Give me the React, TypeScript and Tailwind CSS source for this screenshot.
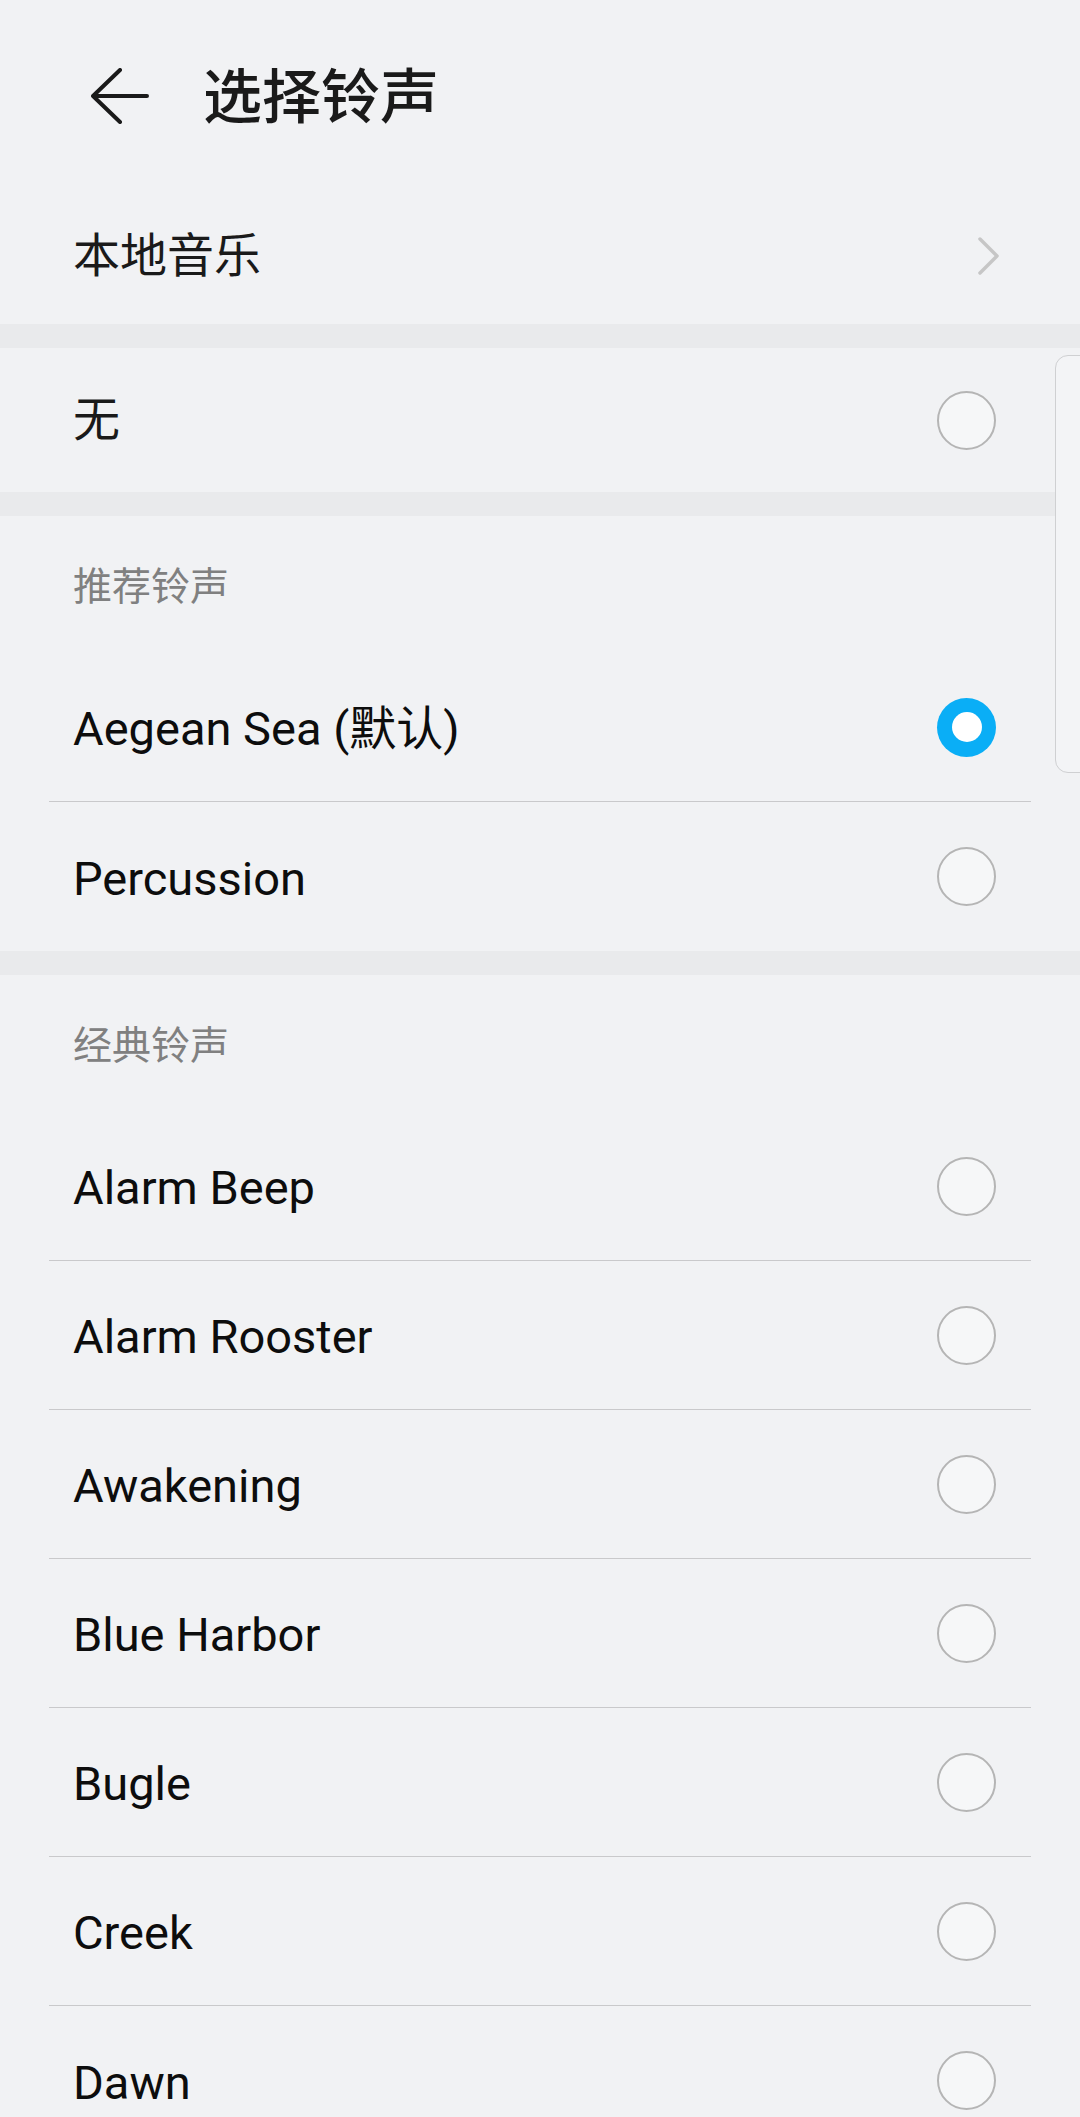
import React from "react";

const FONT = { fontFamily: "Roboto, 'Noto Sans CJK SC', 'Noto Sans', sans-serif" };

function Radio({ checked }: { checked?: boolean }) {
  if (checked) {
    return (
      <div className="w-[59px] h-[59px] rounded-full bg-[#0aaef6] flex items-center justify-center shrink-0">
        <div className="w-[30px] h-[30px] rounded-full bg-white" />
      </div>
    );
  }
  return <div className="w-[59px] h-[59px] rounded-full border-[2.5px] border-[#b5b5b5] bg-[#f6f7f8] shrink-0" />;
}

function Row({ label, checked, divider }: { label: string; checked?: boolean; divider?: boolean }) {
  return (
    <div className={`mx-[49px] h-[149px] flex items-center justify-between pl-[24px] pr-[35px] ${divider ? "border-b border-[#c9c9cb]" : ""}`}>
      <span className="text-[47px] leading-[56px] pt-[4px] text-[#0d0d0d]">{label}</span>
      <Radio checked={checked} />
    </div>
  );
}

function SectionHeader({ label }: { label: string }) {
  return (
    <div className="h-[137px] flex items-center pt-[5px] pl-[73px]">
      <span className="text-[39px] leading-[46px] text-[#808080]">{label}</span>
    </div>
  );
}

function Band() {
  return <div className="h-[24px] bg-[#e9eaec]" />;
}

export default function App() {
  const classic = ["Alarm Beep", "Alarm Rooster", "Awakening", "Blue Harbor", "Bugle", "Creek", "Dawn"];
  return (
    <div className="relative w-[1080px] min-h-[2117px] bg-[#f1f2f4] overflow-hidden" style={FONT}>
      {/* Header */}
      <div className="h-[192px] flex items-center pl-[91px]">
        <svg width="58" height="56" viewBox="0 0 58 56" className="shrink-0">
          <path d="M2 28 H56 M29 2 L2 28 L29 54" fill="none" stroke="#1a1a1a" strokeWidth="4" strokeLinecap="round" strokeLinejoin="round" />
        </svg>
        <span className="ml-[54px] pt-[4px] text-[59px] leading-[70px] font-medium text-[#1a1a1a]">选择铃声</span>
      </div>

      {/* Local music */}
      <div className="mx-[49px] h-[132px] flex items-center justify-between pl-[24px] pr-[30px] pb-[4px]">
        <span className="text-[47px] leading-[56px] text-[#1a1a1a]">本地音乐</span>
        <svg width="24" height="40" viewBox="0 0 24 40" className="shrink-0">
          <path d="M3 3 L20 20 L3 37" fill="none" stroke="#c6c6c6" strokeWidth="3.5" strokeLinecap="round" strokeLinejoin="round" />
        </svg>
      </div>

      <Band />

      {/* None */}
      <div className="mx-[49px] h-[144px] flex items-center justify-between pl-[24px] pr-[35px]">
        <span className="text-[47px] leading-[56px] text-[#1a1a1a]">无</span>
        <Radio />
      </div>

      <Band />

      <SectionHeader label="推荐铃声" />
      <Row label="Aegean Sea (默认)" checked divider />
      <Row label="Percussion" />

      <Band />

      <SectionHeader label="经典铃声" />
      {classic.map((name, i) => (
        <Row key={name} label={name} divider={i < classic.length - 1} />
      ))}

      {/* Edge panel overlay */}
      <div className="absolute left-[1055px] top-[355px] w-[40px] h-[418px] rounded-l-[13px] border border-[#cfd0d2] bg-[#f3f4f6]" />
    </div>
  );
}
